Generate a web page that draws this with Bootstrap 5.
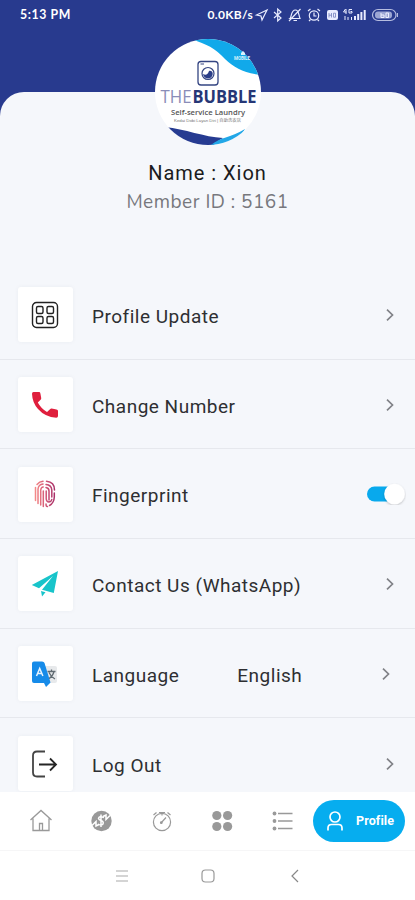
<!DOCTYPE html>
<html lang="en">
<head>
<meta charset="utf-8">
<meta name="viewport" content="width=device-width, initial-scale=1">
<title>Profile</title>
<link href="https://cdn.jsdelivr.net/npm/bootstrap@5.3.0/dist/css/bootstrap.min.css" rel="stylesheet">
<style>
body{font-family:Roboto,"Liberation Sans",sans-serif;background:#283a8e}
svg{display:block;flex-shrink:0}
.phone{width:415px;height:900px;background:#283a8e}
.status{height:30px;padding:0 17px 0 20px;font-family:Lato,sans-serif;color:#fff;font-weight:700}
.clock{font-size:12.3px;letter-spacing:.6px;line-height:30px}
.rate{font-size:12px;letter-spacing:.3px;line-height:30px}
.sheet{margin-top:62px;height:700px;background:#f5f7fb;border-radius:24px 24px 0 0}
.avatar{margin-top:-53px;width:106px;height:106px;flex-shrink:0}
.who{height:178px;flex-shrink:0}
.name{font-size:20px;line-height:24px;letter-spacing:.98px;color:#1b1b1d;margin-top:16px}
.member{font-family:"Nunito",Lato,sans-serif;font-size:19px;line-height:24px;letter-spacing:.5px;color:#77787d;margin-top:5px}
.options{min-height:0;overflow:hidden}
.option{height:89.7px;flex-shrink:0;border-bottom:1.5px solid #e6e8ed;padding:1px 19px 0 18px;font-size:19px;letter-spacing:.5px;color:#2e2f32}
.tile{width:55px;height:55px;background:#fff;border-radius:3px;box-shadow:0 0 4px rgba(40,50,80,.05);margin-right:19px;padding-right:1px;flex-shrink:0}
.option .label{padding-top:4px;line-height:24px;white-space:nowrap}
.value{margin-left:58px}
.option.shifted{padding-right:23px}
.option.with-toggle{padding-right:9px}
.toggle{width:39px;height:22px}
.tabs{height:58px;background:#fff;padding:0 10px 0 29px}
.tabs .tab{width:24px;margin-right:36.4px}
.tabs .tab.last{margin-right:0}
.pill{width:92px;height:42px;border-radius:21px;background:#06adef;color:#fff;font-size:12.5px;font-weight:700;letter-spacing:.1px;padding-left:13px;gap:12px}
.keys{height:50px;background:#fff;border-top:1px solid #f6f6f7;gap:70px;padding-top:0}
</style>
<script src="https://cdn.jsdelivr.net/npm/bootstrap@5.3.0/dist/js/bootstrap.bundle.min.js"></script>
</head>
<body class="m-0 overflow-hidden">
<div class="phone d-flex flex-column overflow-hidden">
  <header class="status d-flex justify-content-between align-items-center flex-shrink-0">
    <span class="clock">5:13 PM</span>
    <div class="d-flex align-items-center">
      <span class="rate">0.0KB/s</span>
      <svg width="145" height="20" viewBox="253 5 145 20" fill="none" stroke="#e9ecff" stroke-width="1.200">
        <path d="M256.500 15L267 10L262 20L261 16Z"/>
        <path d="M274 12L281 18L277.700 21V9L281 12L274 18"/>
        <path d="M290 18.500C292 17 290.500 10 295.500 10C299 10 298.500 15 300 18.500ZM293.500 20.500H297M300.500 9L289 21"/>
        <circle cx="314" cy="15.500" r="4.700"/><path d="M314 12.500V16H316.500M308 11L310.500 9M320 11L317.500 9M310.500 19.500L309 21M317.500 19.500L319 21"/>
        <rect x="327" y="10" width="11" height="10" rx="2" fill="#e9ecff" stroke="none"/>
        <path d="M329 13V17.500M329 15.200H331.500M331.500 13V17.500M333.500 13.200H335.500V17.200H333.500Z" stroke="#7480bb" stroke-width=".8"/>
        <path d="M345.500 9L343.500 12H346.500M346 9V14M352 9.500H349V13H352V11.500H350.500M345 16V20M348 17V20M351.500 17V20" stroke-width="1"/>
        <path d="M355 16V20M358.200 14V20M361.400 12V20M364.700 10V20" stroke-width="2"/>
        <rect x="372.500" y="9.500" width="23.500" height="11" rx="5.500" stroke="#b6bde0"/><path d="M397.500 13V17" stroke="#b6bde0"/>
        <rect x="375" y="11.500" width="17" height="7" rx="3" fill="#9ca6d3" stroke="none"/>
        <path d="M381 13V17.500H384V15H381M386 13H388.500V17.500H386Z" stroke="#eef0ff" stroke-width="1"/>
      </svg>
    </div>
  </header>
  <main class="sheet d-flex flex-column">
    <section class="who d-flex flex-column align-items-center">
      <svg class="avatar" viewBox="0 0 106 106">
        <defs><clipPath id="disc"><circle cx="53" cy="53" r="53"/></clipPath></defs>
        <g clip-path="url(#disc)">
          <rect width="106" height="106" fill="#fff"/>
          <path d="M35 0H106V36C88 34 80 29 70 20C60 9 52 5 35 0Z" fill="#11a9ea"/>
          <path d="M10 88C30 90 49 98 68 99C62 102 60 106 58 106H20Z" fill="#263b91"/>
          <path d="M56 106C65 98 75 99 90 90L80 106Z" fill="#22a7e7"/>
        </g>
        <rect x="43" y="22.500" width="20" height="23.500" rx="3" fill="none" stroke="#344582" stroke-width="1.300"/>
        <path d="M45.500 25H49" stroke="#344582"/>
        <circle cx="53" cy="34.500" r="6" fill="#fff" stroke="#344582" stroke-width="1.200"/>
        <path d="M48 35C51 37 53 35 54 32C58 31 59 36 56 38.500C53 41 48.500 39 48 35Z" fill="#2b3e88"/>
        <g font-family="'Open Sans',sans-serif">
          <text x="5.500" y="64" font-size="17.500" fill="#8a8db8" textLength="31" lengthAdjust="spacingAndGlyphs">THE</text>
          <text x="37.500" y="64" font-size="17.500" font-weight="700" fill="#263776" textLength="64" lengthAdjust="spacingAndGlyphs">BUBBLE</text>
          <text x="16" y="75.500" font-size="7" font-weight="600" fill="#555" textLength="74" lengthAdjust="spacingAndGlyphs">Self-service Laundry</text>
        </g>
        <text x="19" y="82.500" font-size="4" fill="#777" font-family="'Liberation Sans','Noto Sans CJK SC',sans-serif" textLength="67" lengthAdjust="spacingAndGlyphs">Kedai Dobi Layan Diri | 自助洗衣店</text>
        <path d="M86 14L88 12L90 14V16H86Z" fill="#d8f1fc"/>
        <text x="79" y="21" font-size="4.500" font-weight="700" fill="#d8f1fc" font-family="Roboto,sans-serif" textLength="16">MOBILE</text>
      </svg>
      <div class="name">Name : Xion</div>
      <div class="member">Member ID : 5161</div>
    </section>
    <section class="options d-flex flex-column flex-grow-1">
      <div class="option d-flex align-items-center">
        <div class="tile d-flex align-items-center justify-content-center">
          <svg width="28" height="28" viewBox="0 0 28 28" fill="none" stroke="#222" stroke-width="1.400"><rect x="1.500" y="1.500" width="25" height="25" rx="4"/><rect x="5.500" y="5.500" width="6.500" height="7" rx="1.500"/><rect x="16" y="5.500" width="6.500" height="7" rx="1.500"/><rect x="5.500" y="15.500" width="6.500" height="7" rx="1.500"/><rect x="16" y="15.500" width="6.500" height="7" rx="1.500"/></svg>
        </div>
        <span class="label">Profile Update</span>
        <svg class="ms-auto" width="12" height="16" viewBox="0 0 12 16" fill="none" stroke="#808287" stroke-width="1.700"><path d="M3 2.700L8.500 8L3 13.300"/></svg>
      </div>
      <div class="option d-flex align-items-center">
        <div class="tile d-flex align-items-center justify-content-center">
          <svg width="28" height="28" viewBox="0 0 28 28" fill="#df1f3d"><path d="M2.500 1H8Q9.200 1 9.400 2.400L10.200 7Q10.400 8 9.600 8.700L6.800 11.500Q10 17.500 16 21L19 18.200Q19.700 17.500 20.700 17.600L25.500 18.400Q27 18.600 27 20V25Q27 26.700 25.300 26.700Q14 26 7 18Q1.300 11.500 1 2.700Q1 1 2.500 1Z"/></svg>
        </div>
        <span class="label">Change Number</span>
        <svg class="ms-auto" width="12" height="16" viewBox="0 0 12 16" fill="none" stroke="#808287" stroke-width="1.700"><path d="M3 2.700L8.500 8L3 13.300"/></svg>
      </div>
      <div class="option with-toggle d-flex align-items-center">
        <div class="tile d-flex align-items-center justify-content-center">
          <svg width="22" height="28" viewBox="0 0 22 28" fill="none" stroke="url(#ink)" stroke-width="1.500" stroke-linecap="round">
            <defs><linearGradient id="ink" gradientUnits="userSpaceOnUse" x1="1" y1="0" x2="21" y2="0"><stop offset="0" stop-color="#f58b88"/><stop offset=".5" stop-color="#d55b78"/><stop offset="1" stop-color="#a62e68"/></linearGradient></defs>
            <path d="M3 4.500Q5.500 1.500 9 1.300M1.500 7.500V20.500M4 23.500V9Q4.500 4.500 9 4M6.700 25V10Q7.200 7 9.200 7M9.300 26.500V11M12.500 1.300Q20.500 2 20.500 10M12 4.500Q17.500 5 17.800 10V17M20.300 13V17Q20 23 15.500 25.500M12 7.500Q15 8 15 11V20M12.200 11V19Q12.500 22 15 22Q17.500 21.500 17.800 19.500M12 24Q12 27 13.500 26.500"/></svg>
        </div>
        <span class="label">Fingerprint</span>
        <svg class="toggle ms-auto" viewBox="0 0 39 22"><defs><filter id="lift" x="-30%" y="-30%" width="160%" height="170%"><feDropShadow dx="0" dy="1" stdDeviation=".8" flood-opacity=".25"/></filter></defs><rect x="0" y="3.500" width="32" height="15" rx="7.500" fill="#08a9ed"/><circle cx="27.500" cy="11" r="10.300" fill="#fff" filter="url(#lift)"/></svg>
      </div>
      <div class="option d-flex align-items-center">
        <div class="tile d-flex align-items-center justify-content-center">
          <svg width="28" height="28" viewBox="0 0 28 28" fill="#18c4ca"><path d="M27 1L.8 15L8 18.200L22 6L11 19.800L22.800 23Z"/><path d="M10 21L14.500 22.300L11 26.500Z"/></svg>
        </div>
        <span class="label">Contact Us (WhatsApp)</span>
        <svg class="ms-auto" width="12" height="16" viewBox="0 0 12 16" fill="none" stroke="#808287" stroke-width="1.700"><path d="M3 2.700L8.500 8L3 13.300"/></svg>
      </div>
      <div class="option shifted d-flex align-items-center">
        <div class="tile d-flex align-items-center justify-content-center">
          <svg width="28" height="28" viewBox="0 0 28 28"><rect x="12" y="6" width="14" height="17" rx="2" fill="#e7e9eb"/><path d="M16.500 11.500H24.500M20.500 9.500V11.500M23 11.500Q22 16 17.500 19M18 12.500Q20 17 24 19" fill="none" stroke="#616b72" stroke-width="1.300"/><path d="M3 1.500H11Q13 1.500 13.500 3L19.500 22.500L15 27L13 23H3Q1 23 1 21V3.500Q1 1.500 3 1.500Z" fill="#168be9"/><path d="M5.500 16L8.700 8.500L11.900 16M6.700 13.500H10.700" fill="none" stroke="#e8f4ff" stroke-width="1.500"/></svg>
        </div>
        <span class="label">Language</span><span class="label value">English</span>
        <svg class="ms-auto" width="12" height="16" viewBox="0 0 12 16" fill="none" stroke="#808287" stroke-width="1.700"><path d="M3 2.700L8.500 8L3 13.300"/></svg>
      </div>
      <div class="option border-0 d-flex align-items-center">
        <div class="tile d-flex align-items-center justify-content-center">
          <svg width="28" height="28" viewBox="0 0 28 28" fill="none" stroke="#252525" stroke-width="1.800"><path d="M14 1.500H6Q2 1.500 2 5.500V22.500Q2 26.500 6 26.500H14" stroke="#444"/><path d="M8 14.500H25M19 8.500L25 14.500L19 20.500"/></svg>
        </div>
        <span class="label">Log Out</span>
        <svg class="ms-auto" width="12" height="16" viewBox="0 0 12 16" fill="none" stroke="#808287" stroke-width="1.700"><path d="M3 2.700L8.500 8L3 13.300"/></svg>
      </div>
    </section>
  </main>
  <nav class="tabs d-flex align-items-center flex-shrink-0">
    <svg class="tab" height="24" viewBox="0 0 24 24" fill="none" stroke="#999" stroke-width="1.300"><path d="M1.500 11L12 1.500L22.500 11M4 9.500V21.500H20V9.500M10.500 21.500V14.500H13.500V21.500"/></svg>
    <svg class="tab" height="24" viewBox="0 0 24 24"><circle cx="12.500" cy="12" r="10.200" fill="#999"/><path d="M3 16.500L7 12.500V17L10 15.500M14 7.500L17 6V10.500L21 6.500" fill="none" stroke="#fff" stroke-width="1.500"/><path d="M15 8.500Q10 6.500 9.500 9.500Q10 11 12 11.500Q15 12.500 14 15Q12 17 9 15M12 5.500V18" fill="none" stroke="#fff" stroke-width="1.500"/></svg>
    <svg class="tab" height="24" viewBox="0 0 24 24" fill="none" stroke="#999" stroke-width="1.200"><circle cx="12" cy="13" r="8.600"/><path d="M11 14L16 8.500M3.500 6L6.500 3.500M20.500 6L17.500 3.500M12 4.500V6.500M9 3.500H15"/><circle cx="11.300" cy="13.700" r=".8" fill="#999"/></svg>
    <svg class="tab" height="24" viewBox="0 0 24 24" fill="#999"><circle cx="6.800" cy="6.500" r="4.600"/><circle cx="17.600" cy="6.500" r="4.600"/><circle cx="6.800" cy="17.500" r="4.600"/><circle cx="17.600" cy="17.500" r="4.600"/></svg>
    <svg class="tab last" height="24" viewBox="0 0 24 24" fill="#999" stroke="#999"><path d="M7 4.500H21.500M7 12H21.500M7 19.500H21.500" stroke-width="1.700"/><g stroke="none"><circle cx="3.500" cy="4.500" r="1.900"/><circle cx="3.500" cy="12" r="1.900"/><circle cx="3.500" cy="19.500" r="1.900"/></g></svg>
    <div class="pill ms-auto d-flex align-items-center flex-shrink-0">
      <svg width="18" height="22" viewBox="0 0 18 22" fill="none" stroke="#fff" stroke-width="1.700"><circle cx="9" cy="7" r="5"/><path d="M2 20.500V18Q2 14.500 5.500 14.500H12.500Q16 14.500 16 18V20.500"/></svg>
      <span class="pill-text">Profile</span>
    </div>
  </nav>
  <div class="keys d-flex align-items-center justify-content-center flex-shrink-0">
    <svg width="16" height="16" viewBox="0 0 16 16" fill="none" stroke="#aaa" stroke-width="1.200"><path d="M2 3H14M2 8H14M2 13H14"/></svg>
    <svg width="16" height="16" viewBox="0 0 16 16" fill="none" stroke="#999" stroke-width="1.200"><rect x="2" y="2" width="12" height="12" rx="3.500"/></svg>
    <svg width="16" height="16" viewBox="0 0 16 16" fill="none" stroke="#888" stroke-width="1.200"><path d="M12 2L6 8L12 14"/></svg>
  </div>
</div>
</body>
</html>
